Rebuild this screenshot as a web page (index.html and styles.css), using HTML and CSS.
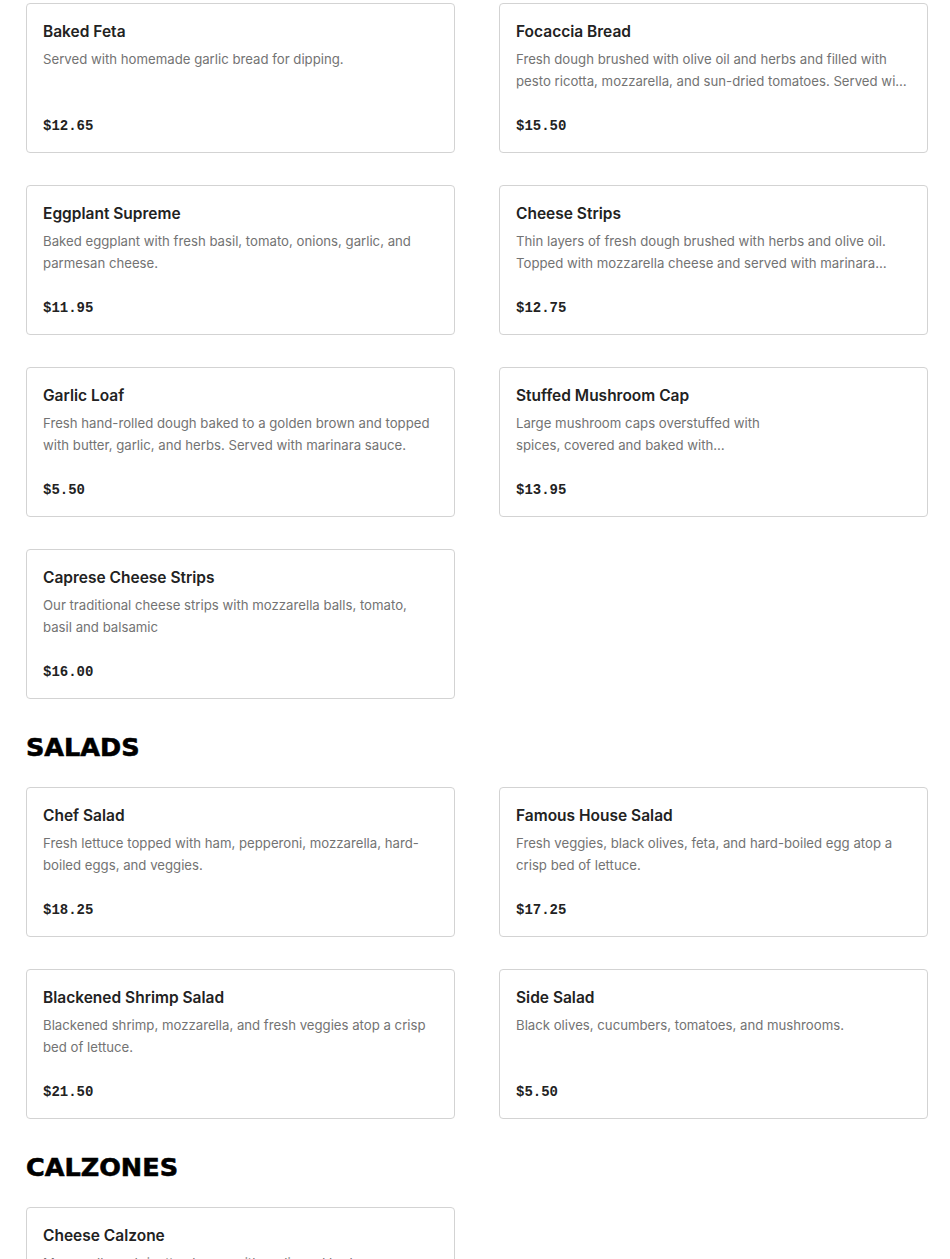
FILE: index.html
```html
<!DOCTYPE html>
<html lang="en">
<head>
  <meta charset="UTF-8" />
  <title>Menu</title>
  <link rel="stylesheet" href="styles.css">
</head>
<body>

<div class="menu">
  <div class="items">
    <div class="item">
      <div class="item-name">Baked Feta</div>
      <div class="item-desc">Served with homemade garlic bread for dipping.</div>
      <div class="item-price">$12.65</div>
    </div>
    <div class="item">
      <div class="item-name">Focaccia Bread</div>
      <div class="item-desc">Fresh dough brushed with olive oil and herbs and filled with pesto ricotta, mozzarella, and sun-dried tomatoes. Served with marinara sauce.</div>
      <div class="item-price">$15.50</div>
    </div>
    <div class="item">
      <div class="item-name">Eggplant Supreme</div>
      <div class="item-desc">Baked eggplant with fresh basil, tomato, onions, garlic, and parmesan cheese.</div>
      <div class="item-price">$11.95</div>
    </div>
    <div class="item">
      <div class="item-name">Cheese Strips</div>
      <div class="item-desc">Thin layers of fresh dough brushed with herbs and olive oil. Topped with mozzarella cheese and served with marinara sauce.</div>
      <div class="item-price">$12.75</div>
    </div>
    <div class="item">
      <div class="item-name">Garlic Loaf</div>
      <div class="item-desc">Fresh hand-rolled dough baked to a golden brown and topped with butter, garlic, and herbs. Served with marinara sauce.</div>
      <div class="item-price">$5.50</div>
    </div>
    <div class="item">
      <div class="item-name">Stuffed Mushroom Cap</div>
      <div class="item-desc narrow">Large mushroom caps overstuffed with spices, covered and baked with mozzarella cheese.</div>
      <div class="item-price">$13.95</div>
    </div>
    <div class="item">
      <div class="item-name">Caprese Cheese Strips</div>
      <div class="item-desc">Our traditional cheese strips with mozzarella balls, tomato, basil and balsamic</div>
      <div class="item-price">$16.00</div>
    </div>
  </div>

  <h2 class="section-title">SALADS</h2>
  <div class="items">
    <div class="item">
      <div class="item-name">Chef Salad</div>
      <div class="item-desc">Fresh lettuce topped with ham, pepperoni, mozzarella, hard-boiled eggs, and veggies.</div>
      <div class="item-price">$18.25</div>
    </div>
    <div class="item">
      <div class="item-name">Famous House Salad</div>
      <div class="item-desc">Fresh veggies, black olives, feta, and hard-boiled egg atop a crisp bed of lettuce.</div>
      <div class="item-price">$17.25</div>
    </div>
    <div class="item">
      <div class="item-name">Blackened Shrimp Salad</div>
      <div class="item-desc">Blackened shrimp, mozzarella, and fresh veggies atop a crisp bed of lettuce.</div>
      <div class="item-price">$21.50</div>
    </div>
    <div class="item">
      <div class="item-name">Side Salad</div>
      <div class="item-desc">Black olives, cucumbers, tomatoes, and mushrooms.</div>
      <div class="item-price">$5.50</div>
    </div>
  </div>

  <h2 class="section-title">CALZONES</h2>
  <div class="items">
    <div class="item">
      <div class="item-name">Cheese Calzone</div>
      <div class="item-desc">Mozzarella and ricotta cheese with garlic and herbs.</div>
      <div class="item-price">$13.50</div>
    </div>
  </div>
</div>

</body>
</html>
```

FILE: styles.css
```css
body {
  margin: 0;
  padding: 0;
  background: #fff;
  font-family: 'Inter', 'Liberation Sans', sans-serif;
  color: #222;
}

.menu {
  padding: 3px 22px 40px 26px;
}

.items {
  display: grid;
  grid-template-columns: 429px 429px;
  column-gap: 44px;
  row-gap: 32px;
}

.item {
  border: 1px solid #d3d3d3;
  border-radius: 4px;
  padding: 16px;
  display: flex;
  flex-direction: column;
}

.item-name {
  font-size: 15.5px;
  font-weight: 600;
  line-height: 24px;
  color: #222;
}

.item-desc {
  margin-top: 4px;
  height: 44px;
  font-size: 13.2px;
  line-height: 22px;
  color: #737373;
  display: -webkit-box;
  -webkit-line-clamp: 2;
  -webkit-box-orient: vertical;
  overflow: hidden;
}

.item-desc.narrow {
  max-width: 260px;
}

.item-price {
  margin-top: 24px;
  font-family: 'Liberation Mono', monospace;
  font-weight: bold;
  font-size: 14px;
  line-height: 20px;
  color: #222;
}

.section-title {
  margin: 32px 0 24px;
  font-family: 'DejaVu Sans', sans-serif;
  font-weight: 900;
  font-size: 25.5px;
  line-height: 32px;
  color: #000;
  -webkit-text-stroke: 0.6px #000;
}
```
